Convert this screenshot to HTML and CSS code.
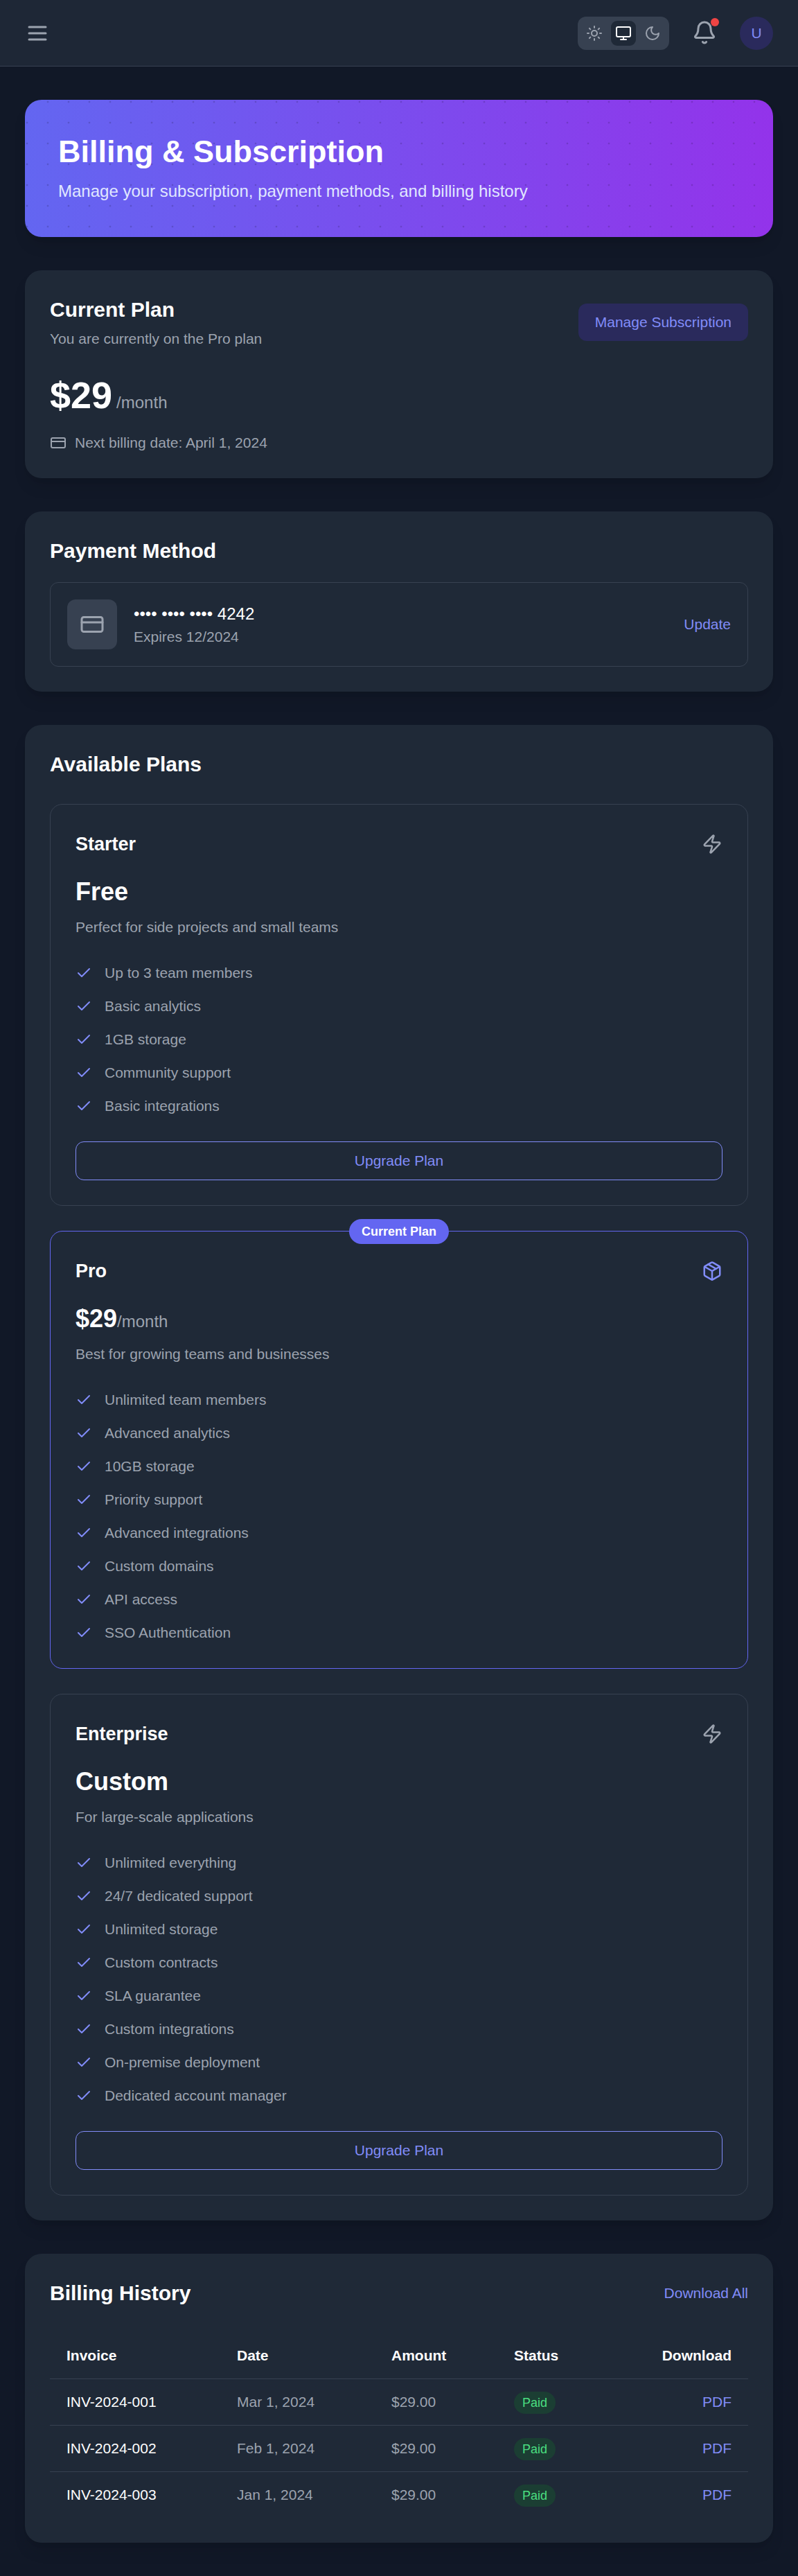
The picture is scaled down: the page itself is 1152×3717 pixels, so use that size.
FILE: index.html
```html
<!DOCTYPE html>
<html lang="en">
<head>
<meta charset="utf-8">
<title>Billing &amp; Subscription</title>
<link rel="stylesheet" href="styles.css">
</head>
<body>
<svg class="sprite" aria-hidden="true">
  <symbol id="check" viewBox="0 0 24 24"><path d="M20 6 9 17l-5-5"/></symbol>
  <symbol id="card" viewBox="0 0 24 24"><rect width="20" height="14" x="2" y="5" rx="2"/><path d="M2 10h20"/></symbol>
  <symbol id="zap" viewBox="0 0 24 24"><path d="M4 14a1 1 0 0 1-.78-1.63l9.9-10.2a.5.5 0 0 1 .86.46l-1.92 6.02A1 1 0 0 0 13 10h7a1 1 0 0 1 .78 1.63l-9.9 10.2a.5.5 0 0 1-.86-.46l1.92-6.02A1 1 0 0 0 11 14z"/></symbol>
  <symbol id="package" viewBox="0 0 24 24"><path d="m7.5 4.27 9 5.15"/><path d="M21 8a2 2 0 0 0-1-1.73l-7-4a2 2 0 0 0-2 0l-7 4A2 2 0 0 0 3 8v8a2 2 0 0 0 1 1.73l7 4a2 2 0 0 0 2 0l7-4A2 2 0 0 0 21 16Z"/><path d="m3.3 7 8.7 5 8.7-5"/><path d="M12 22V12"/></symbol>
</svg>

<header class="topbar">
  <button class="icon-button" aria-label="Menu">
    <svg class="icon icon-lg" viewBox="0 0 24 24"><path d="M4 6h16M4 12h16M4 18h16"/></svg>
  </button>
  <div class="topbar-actions">
    <div class="theme-switch">
      <button class="theme-option" aria-label="Light"><svg class="icon icon-sm" viewBox="0 0 24 24"><circle cx="12" cy="12" r="4"/><path d="M12 2v2M12 20v2M4.93 4.93l1.41 1.41M17.66 17.66l1.41 1.41M2 12h2M20 12h2M6.34 17.66l-1.41 1.41M19.07 4.93l-1.41 1.41"/></svg></button>
      <button class="theme-option is-active" aria-label="System"><svg class="icon icon-sm" viewBox="0 0 24 24"><rect width="20" height="14" x="2" y="3" rx="2"/><path d="M8 21h8M12 17v4"/></svg></button>
      <button class="theme-option" aria-label="Dark"><svg class="icon icon-sm" viewBox="0 0 24 24"><path d="M12 3a6 6 0 0 0 9 9 9 9 0 1 1-9-9Z"/></svg></button>
    </div>
    <button class="icon-button bell" aria-label="Notifications">
      <svg class="icon icon-lg" viewBox="0 0 24 24"><path d="M10.268 21a2 2 0 0 0 3.464 0"/><path d="M3.262 15.326A1 1 0 0 0 4 17h16a1 1 0 0 0 .74-1.673C19.41 13.956 18 12.499 18 8A6 6 0 0 0 6 8c0 4.499-1.411 5.956-2.738 7.326"/></svg>
      <span class="bell-dot"></span>
    </button>
    <div class="avatar">U</div>
  </div>
</header>

<main class="page">
  <section class="hero">
    <h1 class="hero-title">Billing &amp; Subscription</h1>
    <p class="hero-text">Manage your subscription, payment methods, and billing history</p>
  </section>

  <section class="panel">
    <div class="row-between">
      <div>
        <h2 class="heading">Current Plan</h2>
        <p class="muted current-note">You are currently on the Pro plan</p>
      </div>
      <button class="button-soft">Manage Subscription</button>
    </div>
    <div class="current-price"><span class="current-amount">$29</span><span class="period">/month</span></div>
    <div class="next-billing muted"><svg class="icon icon-sm"><use href="#card"/></svg><span>Next billing date: April 1, 2024</span></div>
  </section>

  <section class="panel">
    <h2 class="heading">Payment Method</h2>
    <div class="method">
      <div class="method-info">
        <div class="method-tile"><svg class="icon icon-lg"><use href="#card"/></svg></div>
        <div>
          <p class="method-number">•••• •••• •••• 4242</p>
          <p class="muted">Expires 12/2024</p>
        </div>
      </div>
      <button class="link">Update</button>
    </div>
  </section>

  <section class="panel">
    <h2 class="heading">Available Plans</h2>
    <div class="plans">
      <article class="plan">
        <div class="row-between"><h3 class="plan-name">Starter</h3><svg class="icon icon-md"><use href="#zap"/></svg></div>
        <p class="plan-price">Free</p>
        <p class="muted plan-note">Perfect for side projects and small teams</p>
        <ul class="features">
          <li><svg class="icon icon-sm"><use href="#check"/></svg>Up to 3 team members</li>
          <li><svg class="icon icon-sm"><use href="#check"/></svg>Basic analytics</li>
          <li><svg class="icon icon-sm"><use href="#check"/></svg>1GB storage</li>
          <li><svg class="icon icon-sm"><use href="#check"/></svg>Community support</li>
          <li><svg class="icon icon-sm"><use href="#check"/></svg>Basic integrations</li>
        </ul>
        <button class="button-outline">Upgrade Plan</button>
      </article>

      <article class="plan is-current">
        <span class="plan-badge">Current Plan</span>
        <div class="row-between"><h3 class="plan-name">Pro</h3><svg class="icon icon-md"><use href="#package"/></svg></div>
        <p class="plan-price">$29<span class="plan-period">/month</span></p>
        <p class="muted plan-note">Best for growing teams and businesses</p>
        <ul class="features">
          <li><svg class="icon icon-sm"><use href="#check"/></svg>Unlimited team members</li>
          <li><svg class="icon icon-sm"><use href="#check"/></svg>Advanced analytics</li>
          <li><svg class="icon icon-sm"><use href="#check"/></svg>10GB storage</li>
          <li><svg class="icon icon-sm"><use href="#check"/></svg>Priority support</li>
          <li><svg class="icon icon-sm"><use href="#check"/></svg>Advanced integrations</li>
          <li><svg class="icon icon-sm"><use href="#check"/></svg>Custom domains</li>
          <li><svg class="icon icon-sm"><use href="#check"/></svg>API access</li>
          <li><svg class="icon icon-sm"><use href="#check"/></svg>SSO Authentication</li>
        </ul>
      </article>

      <article class="plan">
        <div class="row-between"><h3 class="plan-name">Enterprise</h3><svg class="icon icon-md"><use href="#zap"/></svg></div>
        <p class="plan-price">Custom</p>
        <p class="muted plan-note">For large-scale applications</p>
        <ul class="features">
          <li><svg class="icon icon-sm"><use href="#check"/></svg>Unlimited everything</li>
          <li><svg class="icon icon-sm"><use href="#check"/></svg>24/7 dedicated support</li>
          <li><svg class="icon icon-sm"><use href="#check"/></svg>Unlimited storage</li>
          <li><svg class="icon icon-sm"><use href="#check"/></svg>Custom contracts</li>
          <li><svg class="icon icon-sm"><use href="#check"/></svg>SLA guarantee</li>
          <li><svg class="icon icon-sm"><use href="#check"/></svg>Custom integrations</li>
          <li><svg class="icon icon-sm"><use href="#check"/></svg>On-premise deployment</li>
          <li><svg class="icon icon-sm"><use href="#check"/></svg>Dedicated account manager</li>
        </ul>
        <button class="button-outline">Upgrade Plan</button>
      </article>
    </div>
  </section>

  <section class="panel">
    <div class="row-between">
      <h2 class="heading">Billing History</h2>
      <button class="link">Download All</button>
    </div>
    <table class="invoices">
      <colgroup><col class="col-invoice"><col class="col-date"><col class="col-amount"><col class="col-status"><col></colgroup>
      <thead>
        <tr><th>Invoice</th><th>Date</th><th>Amount</th><th>Status</th><th class="align-right">Download</th></tr>
      </thead>
      <tbody>
        <tr><td class="invoice-id">INV-2024-001</td><td>Mar 1, 2024</td><td>$29.00</td><td><span class="status">Paid</span></td><td class="align-right"><a class="link">PDF</a></td></tr>
        <tr><td class="invoice-id">INV-2024-002</td><td>Feb 1, 2024</td><td>$29.00</td><td><span class="status">Paid</span></td><td class="align-right"><a class="link">PDF</a></td></tr>
        <tr><td class="invoice-id">INV-2024-003</td><td>Jan 1, 2024</td><td>$29.00</td><td><span class="status">Paid</span></td><td class="align-right"><a class="link">PDF</a></td></tr>
      </tbody>
    </table>
  </section>
</main>
</body>
</html>
```
FILE: styles.css
```css
* { box-sizing: border-box; margin: 0; padding: 0; }

body {
  background: #111827;
  color: #fff;
  font: 24px/36px "Liberation Sans", Arial, sans-serif;
}

button { background: none; border: 0; font: inherit; color: inherit; }
ul { list-style: none; }

.sprite { display: none; }
.icon {
  display: block;
  flex: none;
  fill: none;
  stroke: currentColor;
  stroke-width: 2;
  stroke-linecap: round;
  stroke-linejoin: round;
}
.icon-sm { width: 24px; height: 24px; }
.icon-md { width: 30px; height: 30px; color: #9ca3af; }
.icon-lg { width: 36px; height: 36px; }

.row-between { display: flex; align-items: center; justify-content: space-between; }
.muted { color: #9ca3af; font-size: 21px; line-height: 30px; }
.link { color: #818cf8; font-size: 21px; line-height: 30px; }

/* Top bar */
.topbar {
  display: flex;
  align-items: center;
  justify-content: space-between;
  height: 96px;
  padding: 1px 36px 0;
  background: #1e2736;
  border-bottom: 1px solid #374151;
}
.topbar-actions { display: flex; align-items: center; }
.icon-button { position: relative; color: #9ca3af; }
.theme-switch { display: flex; gap: 6px; padding: 6px; border-radius: 12px; background: #374151; }
.theme-option { padding: 6px; border-radius: 9px; color: #9ca3af; }
.theme-option.is-active { background: #1f2937; color: #fff; }
.bell { margin: 0 33px 2px; }
.bell-dot {
  position: absolute;
  top: -3px;
  right: -3px;
  width: 12px;
  height: 12px;
  border-radius: 50%;
  background: #ef4444;
}
.avatar {
  width: 48px;
  height: 48px;
  border-radius: 50%;
  background: #2a2a5c;
  color: #818cf8;
  font-size: 21px;
  line-height: 48px;
  text-align: center;
}

/* Page */
.page { display: flex; flex-direction: column; gap: 48px; padding: 48px 36px; }

.hero {
  padding: 48px;
  border-radius: 24px;
  background:
    radial-gradient(circle at 3px 3px, rgba(0, 0, 0, 0.15) 1.5px, transparent 1.6px) 0 0 / 30px 30px,
    linear-gradient(to right, #6366f1, #9333ea);
  box-shadow: 0 15px 22px -4px rgba(0, 0, 0, 0.1), 0 6px 9px -6px rgba(0, 0, 0, 0.1);
}
.hero-title { font-size: 45px; line-height: 54px; }
.hero-text { margin-top: 12px; color: #e0e7ff; }

.panel {
  padding: 36px;
  border-radius: 24px;
  background: #1f2937;
  box-shadow: 0 15px 22px -4px rgba(0, 0, 0, 0.1), 0 6px 9px -6px rgba(0, 0, 0, 0.1);
}
.heading { font-size: 30px; line-height: 42px; }

/* Current plan */
.current-note { margin-top: 6px; }
.button-soft {
  padding: 12px 24px;
  border-radius: 12px;
  background: #2a2a5c;
  color: #818cf8;
  font-size: 21px;
  line-height: 30px;
}
.current-price { display: flex; align-items: baseline; margin-top: 36px; height: 60px; }
.current-amount { font-size: 54px; line-height: 60px; font-weight: 700; }
.period { margin-left: 6px; color: #9ca3af; }
.next-billing { display: flex; align-items: center; gap: 12px; margin-top: 24px; }

/* Payment method */
.method {
  display: flex;
  align-items: center;
  justify-content: space-between;
  margin-top: 24px;
  padding: 24px;
  border: 1px solid #374151;
  border-radius: 12px;
}
.method-info { display: flex; align-items: center; gap: 24px; }
.method-tile { padding: 18px; border-radius: 12px; background: #374151; color: #9ca3af; }

/* Plans */
.plans { display: grid; gap: 36px; margin-top: 36px; }
.plan { position: relative; padding: 36px; border: 1px solid #374151; border-radius: 18px; }
.plan.is-current { border-color: #6366f1; }
.plan.is-current .icon-md { color: #818cf8; }
.plan-badge {
  position: absolute;
  top: -18px;
  left: 50%;
  transform: translateX(-50%);
  padding: 6px 18px;
  border-radius: 18px;
  background: #6366f1;
  font-size: 18px;
  line-height: 24px;
  font-weight: 700;
  white-space: nowrap;
}
.plan-name { font-size: 27px; line-height: 42px; }
.plan-price { margin-top: 24px; height: 48px; font-size: 36px; line-height: 48px; font-weight: 700; }
.plan-period { color: #9ca3af; font-size: 24px; font-weight: 400; }
.plan-note { margin-top: 12px; }
.features { display: grid; gap: 18px; margin-top: 36px; color: #9ca3af; font-size: 21px; line-height: 30px; }
.features li { display: flex; align-items: center; gap: 18px; }
.features .icon { color: #818cf8; }
.button-outline {
  display: block;
  width: 100%;
  margin-top: 36px;
  padding: 12px 24px;
  border: 1px solid #818cf8;
  border-radius: 12px;
  color: #818cf8;
  font-size: 21px;
  line-height: 30px;
}

/* Billing history */
.invoices {
  width: 100%;
  margin-top: 36px;
  border-collapse: separate;
  border-spacing: 0;
  table-layout: fixed;
  font-size: 21px;
  line-height: 30px;
}
.col-invoice { width: 246px; }
.col-date { width: 223px; }
.col-amount { width: 177px; }
.col-status { width: 166px; }
.invoices th, .invoices td { padding: 18px 24px; text-align: left; }
.invoices td { color: #9ca3af; }
.invoices th, .invoices tr:not(:last-child) td { border-bottom: 1px solid #374151; }
.invoices .invoice-id { color: #fff; white-space: nowrap; }
.invoices .align-right { text-align: right; }
.status {
  padding: 6px 12px;
  border-radius: 18px;
  background: #1b3e33;
  color: #4ade80;
  font-size: 18px;
  line-height: 24px;
}
```
